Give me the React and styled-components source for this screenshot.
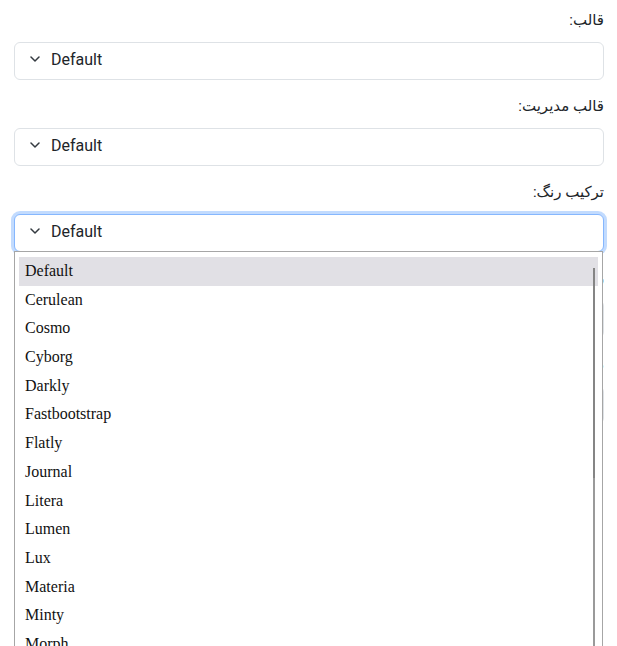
import { createGlobalStyle } from 'styled-components'
import styled from 'styled-components'

const themes = [
  'Default', 'Cerulean', 'Cosmo', 'Cyborg', 'Darkly', 'Fastbootstrap', 'Flatly',
  'Journal', 'Litera', 'Lumen', 'Lux', 'Materia', 'Minty', 'Morph', 'Pulse', 'Quartz'
]

const fields = [
  { label: 'قالب:', value: 'Default' },
  { label: 'قالب مدیریت:', value: 'Default' },
  { label: 'ترکیب رنگ:', value: 'Default', open: true }
]

const Chevron = () => (
  <svg width='10' height='6' viewBox='0 0 10 6' fill='none'>
    <path d='M1 1l4 4 4-4' stroke='#343a40' strokeWidth='1.5' strokeLinecap='round' strokeLinejoin='round' />
  </svg>
)

const App = () => {
  return (
    <>
      <GlobalStyle />
      <Form dir='rtl'>
        {fields.map(field => (
          <Field key={field.label}>
            <Label>{field.label}</Label>
            <SelectWrap>
              <SelectBox $focused={field.open}>
                <Chevron />
                <Value>{field.value}</Value>
              </SelectBox>
              {field.open && (
                <Menu>
                  {themes.map((t, i) => (
                    <Option key={t} $active={i === 0}>{t}</Option>
                  ))}
                  <Track>
                    <Thumb />
                  </Track>
                </Menu>
              )}
            </SelectWrap>
          </Field>
        ))}
        <Field>
          <Label>زبان:</Label>
          <SelectBox>
            <Chevron />
            <Value>Persian</Value>
          </SelectBox>
        </Field>
        <Field>
          <Label>منطقه زمانی:</Label>
          <SelectBox>
            <Chevron />
            <Value>Asia/Tehran</Value>
          </SelectBox>
        </Field>
      </Form>
    </>
  )
}

// Styles
const GlobalStyle = createGlobalStyle`
  html, body {
    margin: 0;
    background: #fff;
    font-family: Roboto, "DejaVu Sans", sans-serif;
    color: #212529;
    overflow: hidden;
  }
`

const Form = styled.div`
  min-height: 700px;
  padding: 8px 13px 0 14px;
`

const Field = styled.div`
  margin-bottom: 14px;
`

const Label = styled.label`
  display: block;
  font-family: Roboto, "DejaVu Sans", sans-serif;
  font-size: 15px;
  line-height: 24px;
  margin-bottom: 10px;
  color: #212529;
`

const SelectWrap = styled.div`
  position: relative;
`

const SelectBox = styled.div`
  direction: ltr;
  display: flex;
  align-items: center;
  gap: 11px;
  box-sizing: border-box;
  height: 38px;
  padding: 0 15px 4px;
  background: #fff;
  border: 1px solid ${p => (p.$focused ? '#86b7fe' : '#dee2e6')};
  border-radius: 6px;
  box-shadow: ${p => (p.$focused ? '0 0 0 3px rgba(13, 110, 253, 0.25)' : 'none')};
`

const Value = styled.span`
  font-family: Roboto, sans-serif;
  font-size: 16px;
  color: #212529;
`

const Menu = styled.div`
  direction: ltr;
  position: absolute;
  top: calc(100% - 1px);
  left: 0;
  right: 1px;
  height: 420px;
  overflow: hidden;
  box-sizing: border-box;
  padding: 5px 4px 4px;
  background: #fff;
  border: 1px solid #a6a6a6;
  z-index: 10;
`

const Option = styled.div`
  height: 28.7px;
  line-height: 28.7px;
  padding-left: 6px;
  font-family: "Liberation Serif", serif;
  font-size: 16px;
  color: #111;
  background: ${p => (p.$active ? '#e1e0e5' : 'transparent')};
`

const Track = styled.div`
  position: absolute;
  top: 16px;
  bottom: 0;
  right: 7px;
  width: 2px;
  background: #9a9a9a;
`

const Thumb = styled.div`
  height: 210px;
  background: #858585;
`

export default App
